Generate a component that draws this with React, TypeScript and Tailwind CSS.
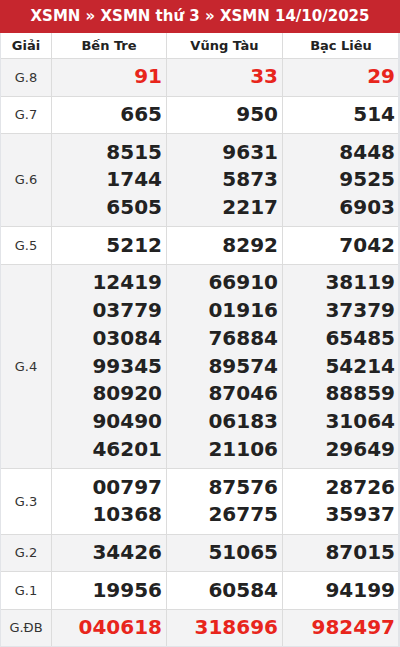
const PROVINCES = ["Bến Tre", "Vũng Tàu", "Bạc Liêu"];

type Row = { label: string; values: string[][]; red?: boolean };

const ROWS: Row[] = [
  { label: "G.8", values: [["91"], ["33"], ["29"]], red: true },
  { label: "G.7", values: [["665"], ["950"], ["514"]] },
  {
    label: "G.6",
    values: [
      ["8515", "1744", "6505"],
      ["9631", "5873", "2217"],
      ["8448", "9525", "6903"],
    ],
  },
  { label: "G.5", values: [["5212"], ["8292"], ["7042"]] },
  {
    label: "G.4",
    values: [
      ["12419", "03779", "03084", "99345", "80920", "90490", "46201"],
      ["66910", "01916", "76884", "89574", "87046", "06183", "21106"],
      ["38119", "37379", "65485", "54214", "88859", "31064", "29649"],
    ],
  },
  {
    label: "G.3",
    values: [
      ["00797", "10368"],
      ["87576", "26775"],
      ["28726", "35937"],
    ],
  },
  { label: "G.2", values: [["34426"], ["51065"], ["87015"]] },
  { label: "G.1", values: [["19956"], ["60584"], ["94199"]] },
  { label: "G.ĐB", values: [["040618"], ["318696"], ["982497"]], red: true },
];

export default function App() {
  return (
    <div className="w-[400px] h-[647px] bg-white font-['DejaVu_Sans',sans-serif]">
      <div className="h-[33px] bg-[#c6262e] flex items-center justify-center text-white font-bold text-[15px]">
        XSMN » XSMN thứ 3 » XSMN 14/10/2025
      </div>
      <div className="w-[400px] border-l border-r-2 border-b-2 border-[#e2e4e8]">
        <div className="grid grid-cols-[51px_115px_116px_116px] border-b border-[#dcdcdc]">
          <div className="h-[25px] flex items-center justify-center text-[13px] font-bold text-[#222] border-r border-[#dcdcdc]">
            Giải
          </div>
          {PROVINCES.map((p, i) => (
            <div
              key={p}
              className={
                "h-[25px] flex items-center justify-center text-[13px] font-bold text-[#222] " +
                (i < 2 ? "border-r border-[#dcdcdc]" : "")
              }
            >
              {p}
            </div>
          ))}
        </div>
        {ROWS.map((row, idx) => (
          <div
            key={row.label}
            className={
              "grid grid-cols-[51px_115px_116px_116px] border-b border-[#dcdcdc] last:border-b-0 " +
              (idx % 2 === 0 ? "bg-[#f3f3f4]" : "bg-white")
            }
          >
            <div className="flex items-center justify-center text-[13px] text-[#333] border-r border-[#dcdcdc]">
              {row.label}
            </div>
            {row.values.map((col, i) => (
              <div
                key={i}
                className={
                  "flex flex-col items-end justify-center py-[4.4px] pr-[4px] text-[20px] leading-[27.8px] font-bold " +
                  (row.red ? "text-[#e8251c] " : "text-[#222] ") +
                  (i < 2 ? "border-r border-[#dcdcdc]" : "")
                }
              >
                {col.map((n) => (
                  <span key={n}>{n}</span>
                ))}
              </div>
            ))}
          </div>
        ))}
      </div>
    </div>
  );
}
